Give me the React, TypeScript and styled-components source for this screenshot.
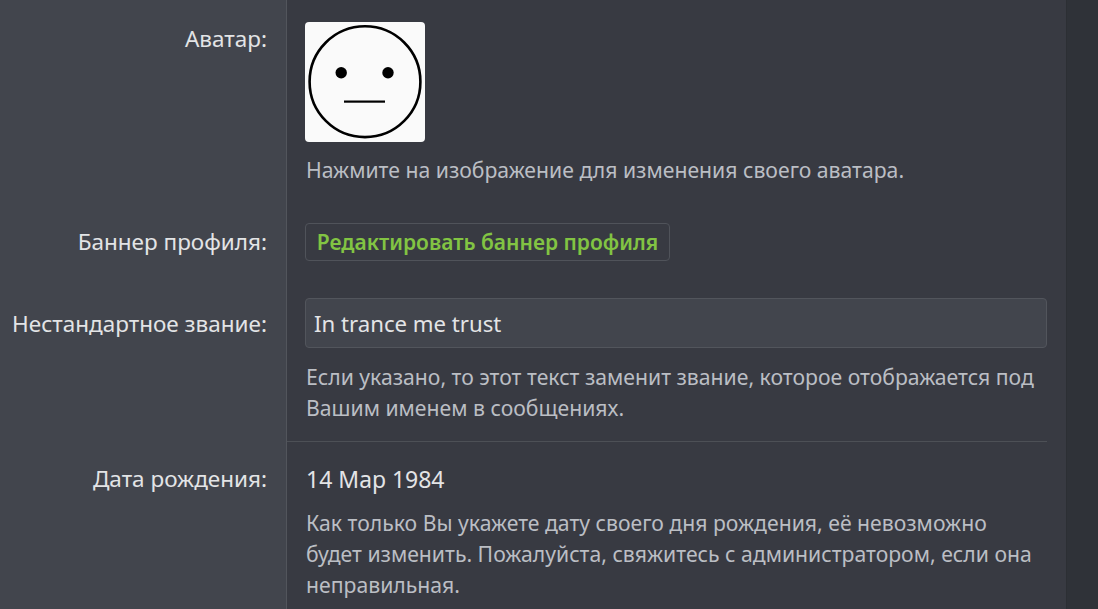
import React from "react";
import styled, { createGlobalStyle } from "styled-components";

const Global = createGlobalStyle`
  html, body { margin: 0; padding: 0; background: #2f3238; }
  body { font-family: "Noto Sans", "Open Sans", sans-serif; }
`;

const Page = styled.div`
  width: 1098px;
  height: 609px;
  overflow: hidden;
  display: flex;
  background: #2f3238;
`;

const Panel = styled.div`
  width: 1067px;
  flex: none;
  display: flex;
  flex-direction: column;
  background: #383a42;
  border-right: 1px solid #2c2f34;
  box-sizing: border-box;
`;

const Row = styled.div<{ $height: number }>`
  display: flex;
  height: ${(p) => p.$height}px;
  flex: none;
`;

const Label = styled.div<{ $top: number }>`
  width: 287px;
  flex: none;
  box-sizing: border-box;
  background: #42454d;
  border-right: 1px solid #52555c;
  padding: ${(p) => p.$top}px 19px 0 0;
  text-align: right;
  font-size: 22.5px;
  line-height: 28px;
  color: #e3e4e6;
`;

const Content = styled.div<{ $top: number; $divided?: boolean }>`
  width: 760px;
  flex: none;
  box-sizing: border-box;
  padding: ${(p) => p.$top}px 0 0 18px;
  border-bottom: ${(p) => (p.$divided ? "1px solid #4d5056" : "none")};
`;

const Avatar = styled.div`
  width: 120px;
  height: 120px;
  background: #fafafa;
  border-radius: 4px;
  display: flex;
`;

const Hint = styled.div<{ $top: number }>`
  margin-top: ${(p) => p.$top}px;
  padding-left: 1px;
  font-size: 21.2px;
  line-height: 31px;
  color: #bbbec4;
`;

const BannerButton = styled.button`
  display: block;
  width: 365px;
  height: 38px;
  padding: 0;
  box-sizing: border-box;
  background: #383a42;
  border: 1px solid #50535a;
  border-radius: 4px;
  font-family: inherit;
  font-size: 21px;
  font-weight: 600;
  color: #82c443;
  text-align: center;
`;

const TextInput = styled.input`
  display: block;
  width: 742px;
  height: 50px;
  box-sizing: border-box;
  padding: 0 8px;
  background: #42454d;
  border: 1px solid #52555c;
  border-radius: 4px;
  font-family: inherit;
  font-size: 22.2px;
  color: #e3e4e6;
  outline: none;
`;

const Value = styled.div`
  padding-left: 1px;
  font-size: 23px;
  line-height: 28px;
  color: #e3e4e6;
`;

const Face = () => (
  <svg width="120" height="120" viewBox="0 0 120 120">
    <circle cx="60" cy="59.7" r="55.4" fill="none" stroke="#000" strokeWidth="2.6" />
    <circle cx="36.2" cy="50.7" r="5.7" fill="#000" />
    <circle cx="83" cy="50.7" r="5.7" fill="#000" />
    <rect x="39" y="78.5" width="41" height="2.2" fill="#000" />
  </svg>
);

export default function App() {
  return (
    <Page>
      <Global />
      <Panel>
        <Row $height={201}>
          <Label $top={25}>Аватар:</Label>
          <Content $top={22}>
            <Avatar>
              <Face />
            </Avatar>
            <Hint $top={12}>Нажмите на изображение для изменения своего аватара.</Hint>
          </Content>
        </Row>
        <Row $height={76}>
          <Label $top={27}>Баннер профиля:</Label>
          <Content $top={22}>
            <BannerButton>Редактировать баннер профиля</BannerButton>
          </Content>
        </Row>
        <Row $height={165}>
          <Label $top={33}>Нестандартное звание:</Label>
          <Content $top={21} $divided>
            <TextInput readOnly value="In trance me trust" />
            <Hint $top={13}>
              Если указано, то этот текст заменит звание, которое отображается под Вашим именем в сообщениях.
            </Hint>
          </Content>
        </Row>
        <Row $height={167}>
          <Label $top={23}>Дата рождения:</Label>
          <Content $top={23}>
            <Value>14 Мар 1984</Value>
            <Hint $top={14}>
              Как только Вы укажете дату своего дня рождения, её невозможно будет изменить. Пожалуйста, свяжитесь с администратором, если она неправильная.
            </Hint>
          </Content>
        </Row>
      </Panel>
    </Page>
  );
}
